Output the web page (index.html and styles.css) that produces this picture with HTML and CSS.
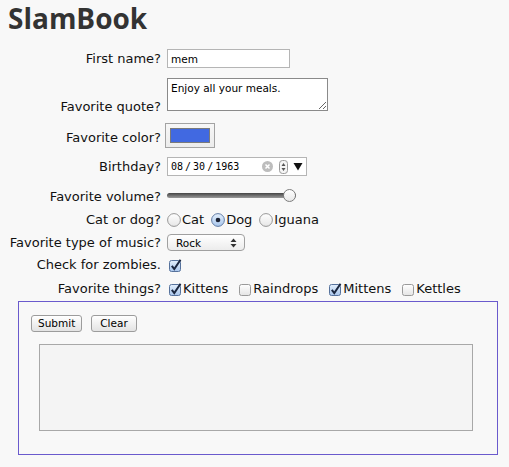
FILE: index.html
```html
<!DOCTYPE html>
<html lang="en">
<head>
<meta charset="utf-8">
<title>SlamBook</title>
<link rel="stylesheet" href="styles.css">
</head>
<body>
<h1 class="title">SlamBook</h1>
<form class="slam">
  <div class="row row-name">
    <label class="lbl" for="fname">First name?</label>
    <input class="text-input" id="fname" type="text" value="mem">
  </div>
  <div class="row row-quote">
    <label class="lbl" for="quote">Favorite quote?</label>
    <textarea class="quote" id="quote">Enjoy all your meals.</textarea>
  </div>
  <div class="row row-color">
    <span class="lbl">Favorite color?</span>
    <span class="color-well"><span class="swatch"></span></span>
  </div>
  <div class="row row-date">
    <span class="lbl">Birthday?</span>
    <span class="date-box">
      <span class="date-text">08<span class="sep">/</span>30<span class="sep">/</span>1963</span>
      <svg class="date-clear" width="11" height="11" viewBox="0 0 11 11"><circle cx="5.5" cy="5.5" r="5.5" fill="#bdbdbd"/><path d="M3.5 3.5 L7.5 7.5 M7.5 3.5 L3.5 7.5" stroke="#fff" stroke-width="1.5"/></svg>
      <svg class="date-spin" width="9" height="14" viewBox="0 0 9 14"><rect x="0.5" y="0.5" width="8" height="13" rx="3" fill="#f4f4f4" stroke="#9a9a9a"/><path d="M2.5 6 L4.5 3 L6.5 6 Z M2.5 8 L4.5 11 L6.5 8 Z" fill="#555"/></svg>
      <svg class="date-drop" width="10" height="9" viewBox="0 0 10 9"><path d="M0.5 1 L9.5 1 L5 8.5 Z" fill="#111"/></svg>
    </span>
  </div>
  <div class="row row-volume">
    <label class="lbl" for="vol">Favorite volume?</label>
    <input class="volume" id="vol" type="range" min="0" max="100" value="100">
  </div>
  <div class="row row-pet">
    <span class="lbl">Cat or dog?</span>
    <span class="choices">
      <span class="choice"><svg class="radio" width="14" height="14" viewBox="0 0 14 14"><defs><linearGradient id="rg" x1="0" y1="0" x2="0" y2="1"><stop offset="0" stop-color="#ffffff"/><stop offset="1" stop-color="#e6e6e6"/></linearGradient></defs><circle cx="7" cy="7" r="6.4" fill="url(#rg)" stroke="#8c8c8c" stroke-width="0.9"/></svg>Cat</span>
      <span class="choice"><svg class="radio" width="14" height="14" viewBox="0 0 14 14"><defs><linearGradient id="rb" x1="0" y1="0" x2="0" y2="1"><stop offset="0" stop-color="#e3effc"/><stop offset="1" stop-color="#a9c6ec"/></linearGradient></defs><circle cx="7" cy="7" r="6.4" fill="url(#rb)" stroke="#56729c" stroke-width="0.9"/><circle cx="7" cy="7" r="2.3" fill="#1b2233"/></svg>Dog</span>
      <span class="choice"><svg class="radio" width="14" height="14" viewBox="0 0 14 14"><circle cx="7" cy="7" r="6.4" fill="url(#rg)" stroke="#8c8c8c" stroke-width="0.9"/></svg>Iguana</span>
    </span>
  </div>
  <div class="row row-music">
    <span class="lbl">Favorite type of music?</span>
    <span class="select-box"><span class="select-text">Rock</span><svg class="select-arrows" width="7" height="10" viewBox="0 0 7 10"><path d="M0.5 4 L3.5 0.5 L6.5 4 Z M0.5 6 L3.5 9.5 L6.5 6 Z" fill="#333"/></svg></span>
  </div>
  <div class="row row-zombie">
    <span class="lbl">Check for zombies.</span>
    <span class="choices">
      <svg class="check" width="13" height="13" viewBox="0 0 13 13"><defs><linearGradient id="cb" x1="0" y1="0" x2="0" y2="1"><stop offset="0" stop-color="#e3effc"/><stop offset="1" stop-color="#a9c6ec"/></linearGradient></defs><rect x="0.5" y="1.5" width="11" height="11" rx="2" fill="url(#cb)" stroke="#56729c"/><path d="M2.8 6.8 L5.3 10 L11.5 0.8" fill="none" stroke="#1b2740" stroke-width="2"/></svg>
    </span>
  </div>
  <div class="row row-things">
    <span class="lbl">Favorite things?</span>
    <span class="choices checks">
      <span class="choice"><svg class="check" width="13" height="13" viewBox="0 0 13 13"><rect x="0.5" y="1.5" width="11" height="11" rx="2" fill="url(#cb)" stroke="#56729c"/><path d="M2.8 6.8 L5.3 10 L11.5 0.8" fill="none" stroke="#1b2740" stroke-width="2"/></svg>Kittens</span>
      <span class="choice"><svg class="check" width="13" height="13" viewBox="0 0 13 13"><defs><linearGradient id="cg" x1="0" y1="0" x2="0" y2="1"><stop offset="0" stop-color="#ffffff"/><stop offset="1" stop-color="#e4e4e4"/></linearGradient></defs><rect x="0.5" y="1.5" width="11" height="11" rx="2" fill="url(#cg)" stroke="#9a9a9a"/></svg>Raindrops</span>
      <span class="choice"><svg class="check" width="13" height="13" viewBox="0 0 13 13"><rect x="0.5" y="1.5" width="11" height="11" rx="2" fill="url(#cb)" stroke="#56729c"/><path d="M2.8 6.8 L5.3 10 L11.5 0.8" fill="none" stroke="#1b2740" stroke-width="2"/></svg>Mittens</span>
      <span class="choice"><svg class="check" width="13" height="13" viewBox="0 0 13 13"><rect x="0.5" y="1.5" width="11" height="11" rx="2" fill="url(#cg)" stroke="#9a9a9a"/></svg>Kettles</span>
    </span>
  </div>
  <fieldset class="box">
    <div class="buttons">
      <button class="btn" type="button">Submit</button>
      <button class="btn btn-clear" type="button">Clear</button>
    </div>
    <div class="output"></div>
  </fieldset>
</form>
</body>
</html>
```

FILE: styles.css
```css
html, body {
  background: #f8f8f8;
}
body {
  margin: 0 8px;
  font-family: "DejaVu Sans", Verdana, sans-serif;
  font-size: 13px;
  color: #111;
}
.title {
  margin: 0;
  font-family: "Open Sans", sans-serif;
  font-weight: 700;
  font-size: 28px;
  line-height: 36px;
  color: #333;
}
.slam {
  display: flex;
  flex-direction: column;
}
.row {
  display: flex;
  align-items: center;
  gap: 6px;
}
.lbl {
  flex: none;
  width: 153px;
  text-align: right;
  line-height: 16px;
  white-space: nowrap;
}
.row-name { margin-top: 13px; }
.row-quote { margin-top: 10px; align-items: flex-end; }
.row-quote .lbl { margin-bottom: -4px; }
.row-color { margin-top: 12px; }
.row-color .lbl { padding-top: 4px; }
.row-date { margin-top: 9px; }
.row-volume { margin-top: 13px; align-items: flex-start; }
.row-pet { margin-top: 7px; }
.row-music { margin-top: 6px; }
.row-zombie { margin-top: 6px; }
.row-things { margin-top: 8px; }

.text-input {
  box-sizing: border-box;
  width: 123px;
  height: 19px;
  margin: 0;
  padding: 0 3px;
  border: 1px solid #b5b5b5;
  background: #fff;
  font-family: "DejaVu Sans", sans-serif;
  font-size: 10.5px;
  color: #000;
  outline: none;
}
.quote {
  box-sizing: border-box;
  width: 161px;
  height: 33px;
  margin: 0;
  padding: 3px 3px;
  border: 1px solid #8a8a8a;
  background: #fff;
  font-family: "DejaVu Sans", sans-serif;
  font-size: 10.5px;
  line-height: 13px;
  color: #000;
  outline: none;
}
.color-well {
  box-sizing: border-box;
  display: flex;
  align-items: center;
  justify-content: center;
  width: 50px;
  height: 25px;
  margin-left: -2px;
  border: 1px solid #a3a3a3;
  background: linear-gradient(#f7f7f7, #ececec);
}
.swatch {
  box-sizing: border-box;
  width: 40px;
  height: 15px;
  background: #4169e1;
  border: 1px solid #7a7a7a;
}
.date-box {
  box-sizing: border-box;
  display: flex;
  align-items: center;
  width: 140px;
  height: 19px;
  padding: 0 0 0 3px;
  border: 1px solid #b5b5b5;
  background: #fff;
}
.date-text {
  font-family: "DejaVu Sans Mono", monospace;
  font-size: 10px;
  color: #000;
  width: 88px;
}
.sep {
  margin: 0 2px;
}
.date-clear { margin-left: 3px; }
.date-spin { margin-left: 6px; }
.date-drop { margin-left: 5px; }

.volume {
  -webkit-appearance: none;
  appearance: none;
  width: 129px;
  height: 12px;
  margin: 0;
  padding: 0;
  background: transparent;
}
.volume::-webkit-slider-runnable-track {
  height: 5px;
  border-radius: 3px;
  background: linear-gradient(#444, #9a9a9a);
}
.volume::-webkit-slider-thumb {
  -webkit-appearance: none;
  width: 13px;
  height: 13px;
  margin-top: -4px;
  border-radius: 50%;
  border: 1px solid #7d7d7d;
  background: linear-gradient(#ffffff, #e8e8e8);
  box-sizing: border-box;
}

.choices {
  display: flex;
  align-items: center;
  gap: 7px;
}
.choice {
  display: flex;
  align-items: center;
  gap: 1px;
  line-height: 16px;
}
.checks {
  gap: 9px;
}
.check {
  flex: none;
  margin-left: 2px;
}
.radio {
  flex: none;
}

.select-box {
  box-sizing: border-box;
  display: flex;
  align-items: center;
  justify-content: space-between;
  width: 78px;
  height: 17px;
  padding: 0 7px 0 8px;
  border: 1px solid #a0a0a0;
  border-radius: 4px;
  background: linear-gradient(#ffffff, #ececec);
  font-size: 10.5px;
  color: #000;
}

.box {
  margin: 4px 0 0 10px;
  width: 480px;
  box-sizing: border-box;
  padding: 13px 12px 23px 12px;
  border: 1px solid #6a5acd;
  min-width: 0;
}
.buttons {
  display: flex;
  gap: 9px;
}
.btn {
  box-sizing: border-box;
  height: 17px;
  margin: 0;
  padding: 0 6px;
  border: 1px solid #9c9c9c;
  border-radius: 3px;
  background: linear-gradient(#ffffff, #e3e3e3);
  font-family: "DejaVu Sans", sans-serif;
  font-size: 10.5px;
  line-height: 15px;
  color: #000;
}
.btn-clear {
  padding: 0 8px;
}
.output {
  box-sizing: border-box;
  margin: 12px 0 0 8px;
  width: 434px;
  height: 87px;
  border: 1px solid #a8a8a8;
  background: #f4f4f4;
}
```
